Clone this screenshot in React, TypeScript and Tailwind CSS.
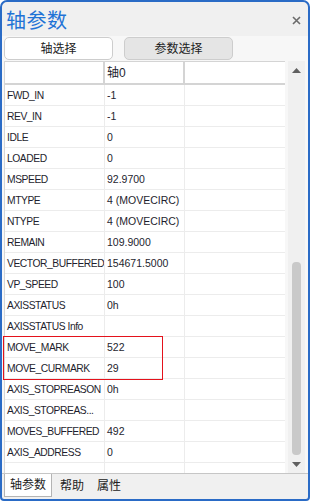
import React from 'react';

const rows: [string, string][] = [
  ['FWD_IN', '-1'],
  ['REV_IN', '-1'],
  ['IDLE', '0'],
  ['LOADED', '0'],
  ['MSPEED', '92.9700'],
  ['MTYPE', '4 (MOVECIRC)'],
  ['NTYPE', '4 (MOVECIRC)'],
  ['REMAIN', '109.9000'],
  ['VECTOR_BUFFERED', '154671.5000'],
  ['VP_SPEED', '100'],
  ['AXISSTATUS', '0h'],
  ['AXISSTATUS Info', ''],
  ['MOVE_MARK', '522'],
  ['MOVE_CURMARK', '29'],
  ['AXIS_STOPREASON', '0h'],
  ['AXIS_STOPREAS...', ''],
  ['MOVES_BUFFERED', '492'],
  ['AXIS_ADDRESS', '0'],
  ['', ''],
];

export default function App() {
  return (
    <div className="w-[310px] h-[501px] bg-white font-['Liberation_Sans','Noto_Sans_CJK_SC',sans-serif]">
      <div className="relative w-[310px] h-[501px] border-2 border-[#2a6bc6] rounded-t-[7px] rounded-b-[4px] bg-[#f0f0f0] flex flex-col overflow-hidden">
        {/* title */}
        <div className="h-[34px] flex items-center justify-between pl-[4px] pr-[7px]">
          <span className="text-[20px] leading-none text-[#1f73d6] tracking-[0.5px] mt-[3px]">轴参数</span>
          <svg width="9" height="9" viewBox="0 0 9 9" className="mt-[2px]">
            <path d="M1 1 L8 8 M8 1 L1 8" stroke="#6b6b6b" strokeWidth="1.6" />
          </svg>
        </div>

        {/* selector buttons */}
        <div className="h-[25px] bg-[#f7f7f7] flex items-start gap-[11px] pl-[2px] pt-[1px]">
          <button className="w-[109px] h-[23px] bg-white border border-[#cdcdcd] rounded-[5px] text-[12px] text-[#222]">
            轴选择
          </button>
          <button className="w-[109px] h-[23px] bg-[#e5e5e5] border border-[#cdcdcd] rounded-[5px] text-[12px] text-[#222]">
            参数选择
          </button>
        </div>

        {/* table + scrollbar */}
        <div className="h-[412px] flex pl-[2px] pr-[3px] bg-[#f7f7f7]">
          <div className="w-[281px] bg-white overflow-hidden border-l border-[#d6d6d6] text-[#1e1e2e]">
            <div className="flex h-[24px] border-t border-b-2 border-[#d4d4d4] bg-white text-[12px]">
              <div className="w-[100px] border-r-2 border-[#d4d4d4]" />
              <div className="w-[80px] border-r-2 border-[#d4d4d4] flex items-center pl-[2px] pt-[1px]">轴0</div>
              <div className="flex-1" />
            </div>
            {rows.map(([k, v], i) => (
              <div key={i} className="flex h-[21px] border-b border-[#ececec]">
                <div className="w-[100px] border-r border-[#ececec] flex items-center pl-[2px] pt-[1px] text-[10.3px] tracking-[-0.45px] whitespace-nowrap overflow-hidden">
                  {k}
                </div>
                <div className="w-[80px] border-r border-[#ececec] flex items-center pl-[2px] pt-[1px] text-[10.5px] whitespace-nowrap">
                  {v}
                </div>
                <div className="flex-1" />
              </div>
            ))}
          </div>
          <div className="w-[3px]" />
          <div className="w-[17px] bg-[#f0f0f0] flex flex-col items-center">
            <svg width="9" height="5" viewBox="0 0 9 5" className="mt-[7px]">
              <path d="M0 5 L4.5 0 L9 5 Z" fill="#606060" />
            </svg>
            <div className="w-[9px] mt-[189px] h-[193px] bg-[#c9c9c9] rounded-[4px]" />
            <svg width="9" height="5" viewBox="0 0 9 5" className="mt-[7px]">
              <path d="M0 0 L9 0 L4.5 5 Z" fill="#606060" />
            </svg>
          </div>
        </div>

        {/* bottom tabs */}
        <div className="flex-1 border-t border-[#c6c6c6] flex items-start pl-[2px] text-[12px] text-[#222]">
          <div className="h-[23px] px-[5px] bg-white border border-t-0 border-[#b4b4b4] flex items-center">轴参数</div>
          <div className="h-[23px] px-[8px] flex items-center">帮助</div>
          <div className="h-[23px] px-[5px] flex items-center">属性</div>
        </div>

        {/* red highlight annotation */}
        <div className="absolute left-[1px] top-[334px] w-[160px] h-[44px] border-[1.5px] border-[#e4121c]" />
      </div>
    </div>
  );
}
